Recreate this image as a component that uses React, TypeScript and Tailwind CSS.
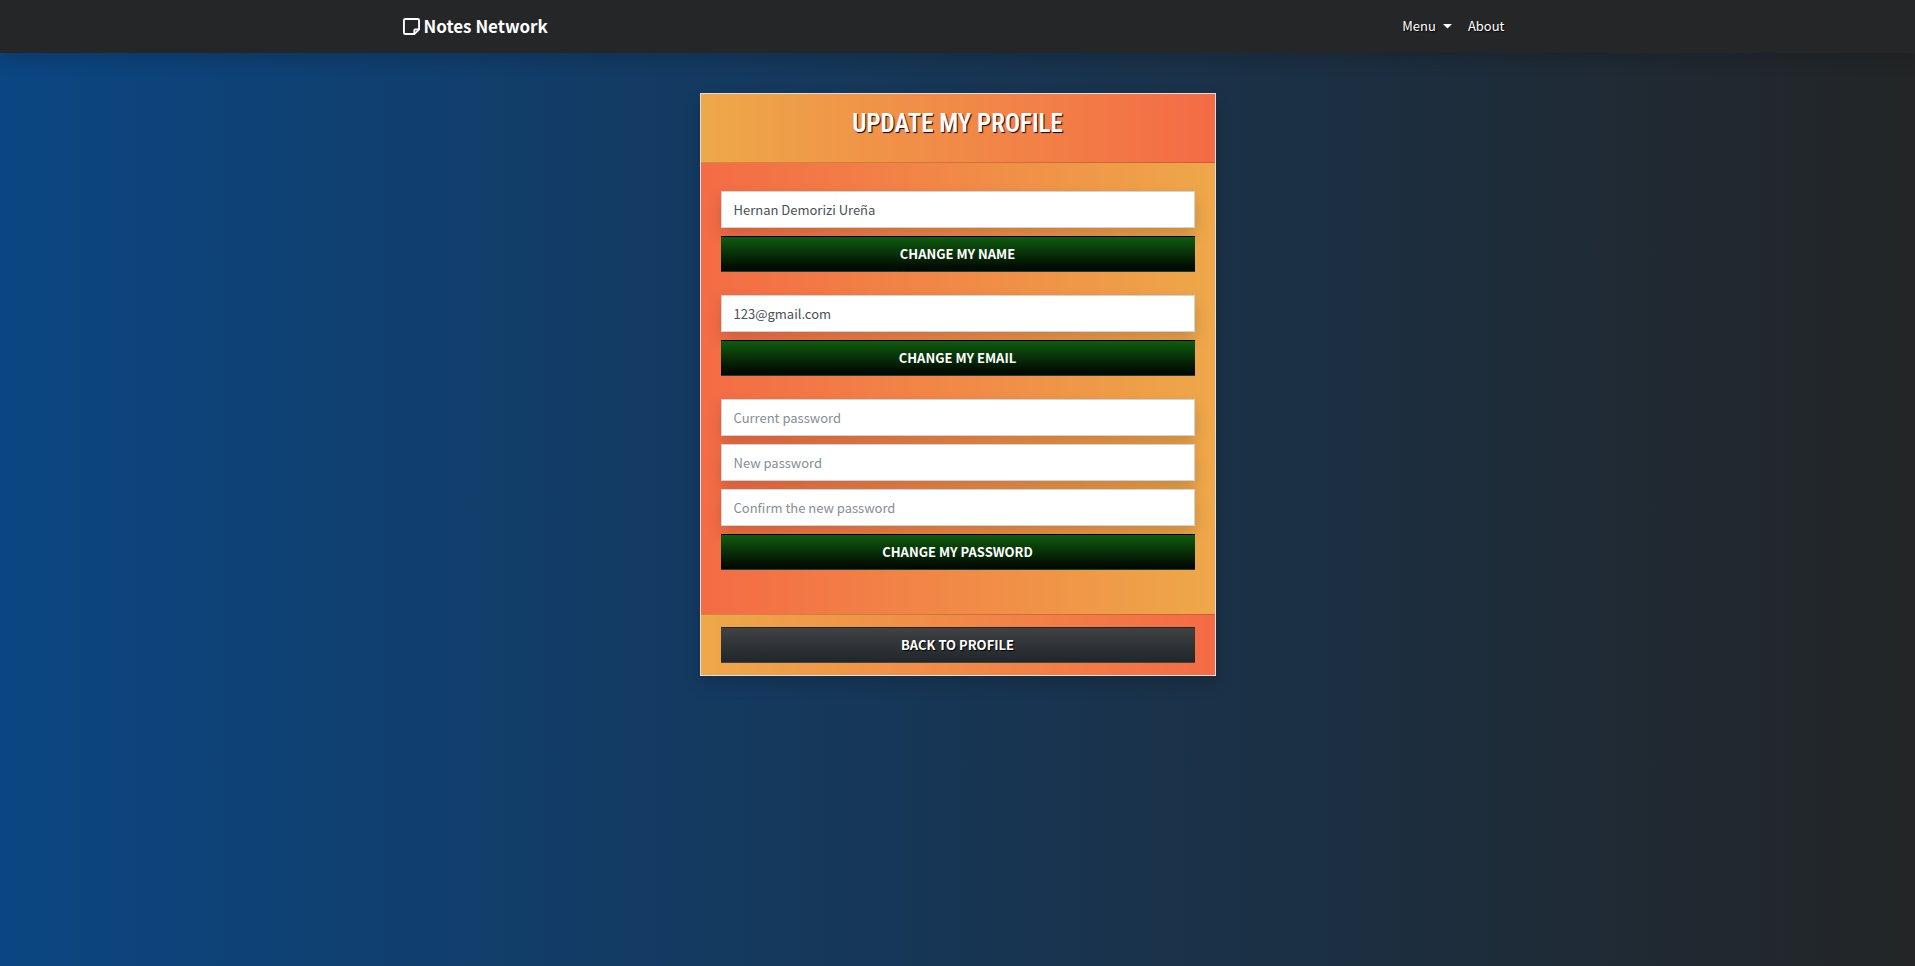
import type { InputHTMLAttributes, ReactNode } from 'react';

function Field({ label, ...props }: { label: string } & InputHTMLAttributes<HTMLInputElement>) {
  return (
    <input
      aria-label={label}
      className="mb-2 block h-[37px] w-full rounded-none border border-[#ced4da] bg-white px-3 text-[13px] text-[#495057] shadow-[0_8px_16px_rgba(0,0,0,0.15)] outline-none placeholder:text-[#868e96]"
      {...props}
    />
  );
}

function SubmitButton({ children }: { children: ReactNode }) {
  return (
    <button
      type="submit"
      className="block h-9 w-full bg-[linear-gradient(to_bottom,#0f5f0f,#000)] text-center text-[13px] font-bold text-white uppercase [box-shadow:inset_0_1px_0_#000,inset_0_-1px_0_#0f4d12]"
    >
      {children}
    </button>
  );
}

export default function App() {
  return (
    <div className="min-h-screen bg-[linear-gradient(to_right,#0b4682,#232526)] font-['Noto_Sans_CJK_SC',sans-serif] text-white">
      <nav className="relative bg-[#252627] pb-px shadow-[0_8px_16px_rgba(0,0,0,0.15)]">
        <div className="mx-auto flex h-[52px] max-w-[1140px] items-center justify-between px-[15px]">
          <a href="#home" className="flex items-center gap-1 text-[17px] leading-6 font-bold">
            <svg viewBox="0 0 18 18" className="size-[17px]" fill="none" stroke="currentColor" strokeWidth="2" strokeLinejoin="round">
              <path d="M2.500 1h13a1.500 1.500 0 0 1 1.500 1.500V12l-5 5H2.500A1.500 1.500 0 0 1 1 15.500v-13A1.500 1.500 0 0 1 2.500 1z" />
              <path d="M17 12h-4a1 1 0 0 0-1 1v4" />
            </svg>
            Notes Network
          </a>
          <div className="flex items-center gap-4 pr-2 text-[13px] [text-shadow:1px_1px_1px_#000]">
            <a href="#menu" className="flex items-center gap-[7px]">
              Menu
              <svg viewBox="0 0 9 5" className="h-[5px] w-[9px]" fill="currentColor">
                <path d="M0 0h9L4.500 4.500z" />
              </svg>
            </a>
            <a href="#about">About</a>
          </div>
        </div>
      </nav>

      <main className="mx-auto mt-10 w-full max-w-[516px] border border-[#dfdfdf] shadow-[0_8px_16px_rgba(0,0,0,0.15)]">
        <header className="h-[69px] border-b border-black/15 bg-[linear-gradient(to_right,#eea849,#f46b45)] pt-3 text-center">
          <h1 className="font-['Roboto_Condensed','Liberation_Sans_Narrow','Liberation_Sans',sans-serif] text-[25px] leading-9 font-semibold uppercase [text-shadow:1px_1px_1px_#000]">
            Update my profile
          </h1>
        </header>
        <div className="bg-[linear-gradient(to_right,#f46b45,#eea849)] px-5 pt-7 pb-11">
          <form className="mb-[23px]">
            <Field label="Name" defaultValue="Hernan Demorizi Ureña" />
            <SubmitButton>Change my name</SubmitButton>
          </form>
          <form className="mb-[23px]">
            <Field label="Email" type="email" defaultValue="123@gmail.com" />
            <SubmitButton>Change my email</SubmitButton>
          </form>
          <form>
            <Field label="Current password" type="password" placeholder="Current password" />
            <Field label="New password" type="password" placeholder="New password" />
            <Field label="Confirm the new password" type="password" placeholder="Confirm the new password" />
            <SubmitButton>Change my password</SubmitButton>
          </form>
        </div>
        <footer className="border-t border-black/15 bg-[linear-gradient(to_right,#eea849,#f46b45)] px-5 py-3">
          <a
            href="#profile"
            className="flex h-9 items-center justify-center bg-[linear-gradient(to_bottom,#414345,#1f2529)] text-[13px] font-bold uppercase [box-shadow:inset_0_1px_0_#232526,inset_0_-1px_0_#414345] [text-shadow:1px_1px_1px_#000]"
          >
            Back to profile
          </a>
        </footer>
      </main>
    </div>
  );
}
